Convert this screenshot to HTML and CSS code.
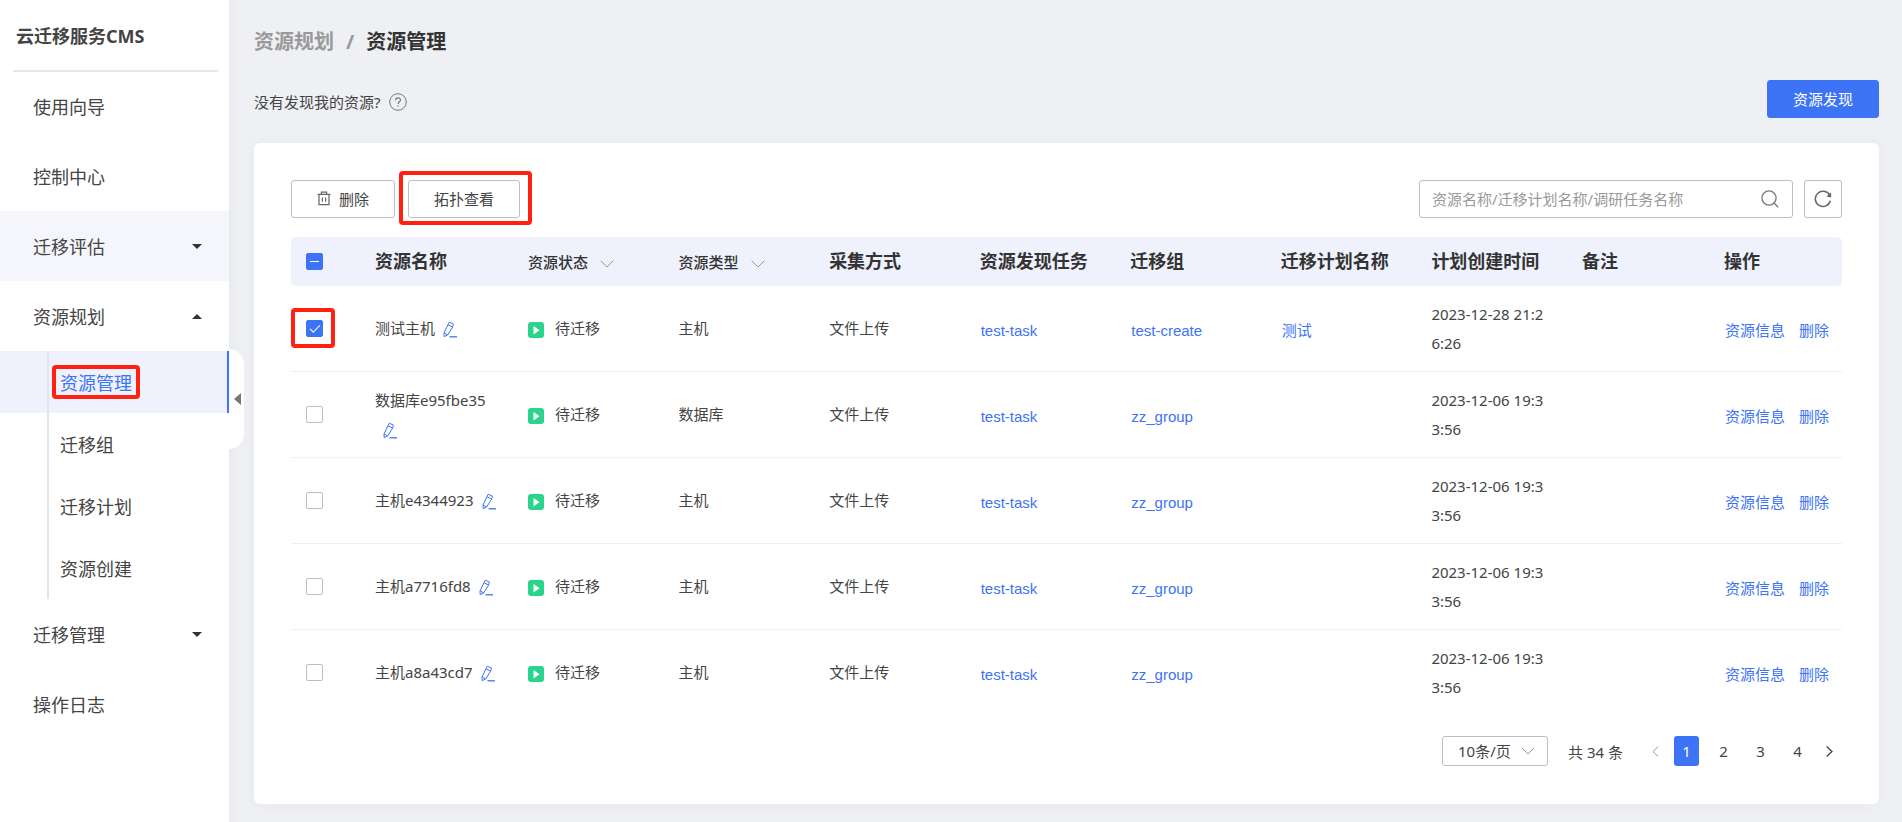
FILE: index.html
```html
<!DOCTYPE html>
<html lang="zh-CN">
<head>
    <meta charset="utf-8">
    <title>资源管理 - 云迁移服务CMS</title>
    <link rel="stylesheet" href="styles.css">
</head>
<body>
    <!-- shared icons -->
    <svg class="sprite" aria-hidden="true">
        <symbol id="i-edit" viewBox="0 0 14 17"><path d="M6.2 1.2 10.4 3 9.6 6.2 4.6 14 1.2 15.6 1 12 5 3.6zM5 3.8 9.4 6M1.2 12l3.2 1.8" fill="none" stroke="currentColor" stroke-linejoin="round"/><path d="M6.5 15.8H14" stroke="currentColor" stroke-width="1.3"/></symbol>
        <symbol id="i-play" viewBox="0 0 16 16"><rect width="16" height="16" rx="3" fill="#2bd48d"/><path d="M5.5 4v8.6l6-4.3z" fill="#fff"/></symbol>
        <symbol id="i-down" viewBox="0 0 14 8"><path d="M.7.7 7 7 13.3.7" fill="none" stroke="currentColor"/></symbol>
    </svg>

    <aside class="sidebar">
        <div class="logo">云迁移服务CMS</div>
        <nav class="menu">
            <a href="#">使用向导</a>
            <a href="#">控制中心</a>
            <a href="#" class="hover">迁移评估<span class="caret"></span></a>
            <a href="#">资源规划<span class="caret up"></span></a>
            <div class="submenu">
                <a href="#" class="active"><span class="mark mark-menu">资源管理</span></a>
                <a href="#">迁移组</a>
                <a href="#">迁移计划</a>
                <a href="#">资源创建</a>
            </div>
            <a href="#">迁移管理<span class="caret"></span></a>
            <a href="#">操作日志</a>
        </nav>
        <button class="collapse" aria-label="收起菜单"></button>
    </aside>

    <main class="main">
        <div class="breadcrumb"><a href="#">资源规划</a><span class="sep">/</span><span class="current">资源管理</span></div>
        <div class="tips">
            <div class="help">没有发现我的资源?
                <svg width="18" height="18" viewBox="0 0 18 18" fill="none" stroke="#777"><circle cx="9" cy="9" r="8.3"/><path d="M6.6 7.2c0-3.2 4.9-3 4.9-.2 0 1.7-2.4 1.8-2.4 3.9M9.1 12.2v1.4" stroke-width="1.2"/></svg>
            </div>
            <button class="btn primary">资源发现</button>
        </div>

        <section class="panel">
            <div class="toolbar">
                <button class="btn delete">
                    <svg width="14" height="15" viewBox="0 0 14 15" fill="none" stroke="#666" stroke-width="1.2"><path d="M.5 3.4h13M4.4 3.2V1.2h5.2v2M2 3.6v10h10v-10M5.4 6.5v4.3M8.6 6.5v4.3"/></svg>删除
                </button>
                <span class="mark mark-btn"><button class="btn">拓扑查看</button></span>
                <div class="search">
                    <input type="text" placeholder="资源名称/迁移计划名称/调研任务名称" aria-label="搜索">
                    <svg width="18" height="18" viewBox="0 0 18 18" fill="none" stroke="#777" stroke-width="1.3"><circle cx="8" cy="8" r="7.1"/><path d="m13 13 4.2 4.2"/></svg>
                </div>
                <button class="btn refresh" aria-label="刷新">
                    <svg width="18" height="18" viewBox="0 0 18 18" fill="none" stroke="#666" stroke-width="1.5"><path d="M16.3 10.8A7.6 7.6 0 1 1 15.6 5.2"/><path d="M17.1 2.6v4.8l-4.6-1z" fill="#666" stroke="none"/></svg>
                </button>
            </div>

            <table class="table">
                <colgroup>
                    <col class="col-check"><col class="col-name"><col><col><col><col><col><col><col><col class="col-remark"><col class="col-action">
                </colgroup>
                <thead>
                    <tr>
                        <th><input type="checkbox" class="partial" aria-label="全选"></th>
                        <th>资源名称</th>
                        <th class="filter">资源状态<svg width="14" height="8"><use href="#i-down"/></svg></th>
                        <th class="filter">资源类型<svg width="14" height="8"><use href="#i-down"/></svg></th>
                        <th>采集方式</th>
                        <th>资源发现任务</th>
                        <th>迁移组</th>
                        <th>迁移计划名称</th>
                        <th>计划创建时间</th>
                        <th>备注</th>
                        <th>操作</th>
                    </tr>
                </thead>
                <tbody>
                    <tr>
                        <td><span class="mark mark-check"><input type="checkbox" checked aria-label="测试主机"></span></td>
                        <td>测试主机<svg class="edit" width="14" height="17"><use href="#i-edit"/></svg></td>
                        <td><svg class="play" width="16" height="16"><use href="#i-play"/></svg>待迁移</td>
                        <td>主机</td>
                        <td>文件上传</td>
                        <td><a href="#">test-task</a></td>
                        <td><a href="#">test-create</a></td>
                        <td><a href="#">测试</a></td>
                        <td class="time">2023-12-28 21:26:26</td>
                        <td></td>
                        <td class="action"><a href="#">资源信息</a><a href="#">删除</a></td>
                    </tr>
                    <tr>
                        <td><input type="checkbox" aria-label="数据库e95fbe35"></td>
                        <td>数据库e95fbe35<svg class="edit" width="14" height="17"><use href="#i-edit"/></svg></td>
                        <td><svg class="play" width="16" height="16"><use href="#i-play"/></svg>待迁移</td>
                        <td>数据库</td>
                        <td>文件上传</td>
                        <td><a href="#">test-task</a></td>
                        <td><a href="#">zz_group</a></td>
                        <td></td>
                        <td class="time">2023-12-06 19:33:56</td>
                        <td></td>
                        <td class="action"><a href="#">资源信息</a><a href="#">删除</a></td>
                    </tr>
                    <tr>
                        <td><input type="checkbox" aria-label="主机e4344923"></td>
                        <td>主机e4344923<svg class="edit" width="14" height="17"><use href="#i-edit"/></svg></td>
                        <td><svg class="play" width="16" height="16"><use href="#i-play"/></svg>待迁移</td>
                        <td>主机</td>
                        <td>文件上传</td>
                        <td><a href="#">test-task</a></td>
                        <td><a href="#">zz_group</a></td>
                        <td></td>
                        <td class="time">2023-12-06 19:33:56</td>
                        <td></td>
                        <td class="action"><a href="#">资源信息</a><a href="#">删除</a></td>
                    </tr>
                    <tr>
                        <td><input type="checkbox" aria-label="主机a7716fd8"></td>
                        <td>主机a7716fd8<svg class="edit" width="14" height="17"><use href="#i-edit"/></svg></td>
                        <td><svg class="play" width="16" height="16"><use href="#i-play"/></svg>待迁移</td>
                        <td>主机</td>
                        <td>文件上传</td>
                        <td><a href="#">test-task</a></td>
                        <td><a href="#">zz_group</a></td>
                        <td></td>
                        <td class="time">2023-12-06 19:33:56</td>
                        <td></td>
                        <td class="action"><a href="#">资源信息</a><a href="#">删除</a></td>
                    </tr>
                    <tr>
                        <td><input type="checkbox" aria-label="主机a8a43cd7"></td>
                        <td>主机a8a43cd7<svg class="edit" width="14" height="17"><use href="#i-edit"/></svg></td>
                        <td><svg class="play" width="16" height="16"><use href="#i-play"/></svg>待迁移</td>
                        <td>主机</td>
                        <td>文件上传</td>
                        <td><a href="#">test-task</a></td>
                        <td><a href="#">zz_group</a></td>
                        <td></td>
                        <td class="time">2023-12-06 19:33:56</td>
                        <td></td>
                        <td class="action"><a href="#">资源信息</a><a href="#">删除</a></td>
                    </tr>
                </tbody>
            </table>

            <div class="pagination">
                <div class="page-size">
                    <select aria-label="每页条数"><option>10条/页</option></select>
                    <svg width="14" height="8"><use href="#i-down"/></svg>
                </div>
                <span class="total">共 34 条</span>
                <div class="pages">
                    <button class="arrow" disabled aria-label="上一页"><svg width="7" height="11" viewBox="0 0 7 11"><path d="M6.3.5 1 5.5l5.3 5" fill="none" stroke="currentColor"/></svg></button>
                    <button class="current">1</button>
                    <button>2</button>
                    <button>3</button>
                    <button>4</button>
                    <button class="arrow" aria-label="下一页"><svg width="7" height="11" viewBox="0 0 7 11"><path d="M.7.5 6 5.5l-5.3 5" fill="none" stroke="currentColor" stroke-width="1.3"/></svg></button>
                </div>
            </div>
        </section>
    </main>
</body>
</html>
```
FILE: styles.css
```css
* { box-sizing: border-box; }
body { display: flex; min-height: 100vh; margin: 0; background: #eff0f4; color: #444; font: 15px "Noto Sans", "Noto Sans CJK SC", sans-serif; }
a { text-decoration: none; }
button, input, select { margin: 0; font: inherit; color: inherit; }
button { padding: 0; border: 0; background: none; cursor: pointer; }
.sprite { display: none; }

/* sidebar */
.sidebar { position: relative; flex: none; width: 229px; background: #fff; box-shadow: 0 0 15px rgba(0, 0, 0, .05); }
.logo { height: 72px; margin: 0 11px 0 13px; padding-left: 3px; line-height: 72px; font-size: 18px; font-weight: bold; border-bottom: 2px solid #e4e7f0; }
.menu { margin-top: -1px; }
.menu a { display: flex; align-items: center; height: 70px; padding: 0 27px 0 33px; font-size: 18px; color: #444; }
.menu .hover { background: #f4f6fb; }
.caret { margin-left: auto; border: 5px solid transparent; border-top-color: #333; border-bottom-width: 0; }
.caret.up { border-top-width: 0; border-bottom: 5px solid #333; }
.submenu { position: relative; }
.submenu::before { content: ""; position: absolute; top: 0; bottom: 0; left: 47px; width: 2px; background: #e2e4ee; }
.submenu a { height: 62px; padding-left: 60px; }
.submenu .active { color: #3d73f5; background: #eff2fc; border-right: 2px solid #3d73f5; }
.collapse { position: absolute; top: 349px; left: 100%; width: 15px; height: 100px; padding-left: 5px; background: #fff; border-radius: 0 15px 15px 0; }
.collapse::before { content: ""; display: block; width: 0; border: 6px solid transparent; border-right: 7px solid #777; border-left-width: 0; }

/* red highlight frames */
.mark { position: relative; display: inline-block; }
.mark::after { content: ""; position: absolute; box-sizing: border-box; border: 4px solid #ff2010; border-radius: 4px; pointer-events: none; }
.mark-menu::after { inset: -4px -8px; }
.mark-btn::after { inset: -9px -12px -7px -9px; }
.mark-check { display: block; }
.mark-check::after { width: 44px; height: 40px; top: -12px; left: -15px; }

/* page head */
.main { flex: 1; min-width: 0; padding: 28px 23px 19px 25px; }
.breadcrumb { line-height: 28px; font-size: 20px; font-weight: bold; color: #999; }
.breadcrumb a { color: #999; }
.breadcrumb .sep { margin: 0 12px; }
.breadcrumb .current { color: #333; }
.tips { display: flex; align-items: flex-end; justify-content: space-between; margin: 24px 0 25px; }
.help { display: flex; align-items: center; gap: 8px; line-height: 32px; }
.btn { height: 38px; padding: 0 25px 2px; background: #fff; border: 1px solid #bdbdcb; border-radius: 3px; }
.btn.primary { color: #fff; background: #3d73f5; border-color: #3d73f5; }

/* panel */
.panel { padding: 37px 37px 38px; background: #fff; border-radius: 6px; box-shadow: 0 0 15px rgba(0, 0, 0, .04); }
.toolbar { display: flex; margin-bottom: 19px; }
.btn.delete { display: flex; align-items: center; gap: 8px; margin-right: 13px; }
.search { display: flex; align-items: center; width: 374px; height: 38px; margin-left: auto; padding: 0 13px 0 12px; border: 1px solid #bdbdcb; border-radius: 3px; }
.search input { flex: 1; padding: 0; border: 0; outline: 0; background: none; }
.search input::placeholder { color: #999; }
.btn.refresh { display: flex; align-items: center; justify-content: center; width: 38px; margin-left: 11px; padding: 0; }

.table { width: 100%; table-layout: fixed; border-collapse: separate; border-spacing: 0; line-height: 29px; }
.col-check { width: 69px; }
.col-name { width: 153px; }
.col-remark { width: 142px; }
.col-action { width: 133px; }
.table th { height: 49px; padding: 0 15px; text-align: left; white-space: nowrap; font-size: 18px; color: #333; background: #eff2fc; }
.table th:first-child { border-radius: 5px 0 0 5px; }
.table th:last-child { border-radius: 0 5px 5px 0; }
.table .filter { padding-top: 2px; font-size: 15px; font-weight: 500; }
.filter svg { margin-left: 12px; color: #999; }
.table td { height: 86px; padding: 0 15px; word-break: break-all; border-bottom: 1px solid #eeeff8; }
.table tr:last-child td { border-bottom-color: transparent; }
.table td.time { padding-right: 17px; }
.table td.action { padding-right: 0; white-space: nowrap; }
.table td a { display: inline-block; margin-left: 1px; padding-top: 4px; font-family: "Liberation Sans", "Noto Sans CJK SC", sans-serif; color: #3d73f5; }
.table td a + a { margin-left: 14px; }
.edit { margin-left: 8px; vertical-align: -4px; color: #3d73f5; }
.play { margin-right: 11px; vertical-align: -4px; }

input[type=checkbox] { appearance: none; display: grid; place-content: center; width: 17px; height: 17px; background: #fff; border: 1px solid #bdbdcb; border-radius: 2px; }
input[type=checkbox]:checked, input.partial { background: #3d73f5; border-color: #3d73f5; }
input[type=checkbox]:checked::before { content: ""; width: 9px; height: 4px; margin-bottom: 3px; border: solid #fff; border-width: 0 0 1px 1px; transform: rotate(-45deg); }
input.partial::before { content: ""; width: 9px; height: 1px; background: #fff; }

.pagination { display: flex; align-items: center; justify-content: flex-end; margin-top: 20px; padding-right: 6px; }
.page-size { display: flex; align-items: center; width: 106px; height: 30px; padding: 0 12px 0 15px; border: 1px solid #bdbdcb; border-radius: 3px; }
.page-size select { flex: 1; min-width: 0; padding: 0; appearance: none; border: 0; outline: 0; background: none; }
.page-size svg { color: #999; }
.total { margin: 0 25px 0 20px; }
.pages { display: flex; gap: 12px; }
.pages button { width: 25px; height: 30px; border-radius: 3px; }
.pages .arrow { width: 14px; }
.pages .arrow:disabled { color: #999; }
.pages .current { color: #fff; background: #3d73f5; }
```
